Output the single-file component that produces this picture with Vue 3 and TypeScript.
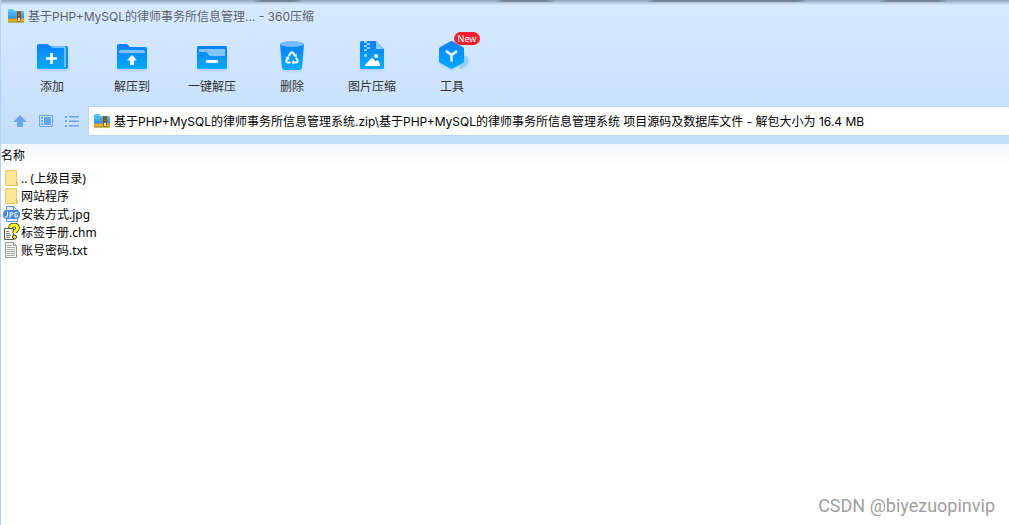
<script setup lang="ts">
import { ref } from 'vue'

type ToolIcon = 'add' | 'extract' | 'oneclick' | 'trash' | 'image' | 'tools'
type FileKind = 'folder' | 'jpg' | 'chm' | 'txt'

const tools: { icon: ToolIcon; label: string; badge?: string }[] = [
  { icon: 'add', label: '添加' },
  { icon: 'extract', label: '解压到' },
  { icon: 'oneclick', label: '一键解压' },
  { icon: 'trash', label: '删除' },
  { icon: 'image', label: '图片压缩' },
  { icon: 'tools', label: '工具', badge: 'New' },
]

const files: { kind: FileKind; name: string }[] = [
  { kind: 'folder', name: '.. (上级目录)' },
  { kind: 'folder', name: '网站程序' },
  { kind: 'jpg', name: '安装方式.jpg' },
  { kind: 'chm', name: '标签手册.chm' },
  { kind: 'txt', name: '账号密码.txt' },
]

const path = ref('基于PHP+MySQL的律师事务所信息管理系统.zip\\基于PHP+MySQL的律师事务所信息管理系统 项目源码及数据库文件 - 解包大小为 16.4 MB')
</script>

<template>
  <div class="window">
    <svg class="defs" width="0" height="0" aria-hidden="true">
      <defs>
        <linearGradient id="blue" x1="0" y1="0" x2="0" y2="1">
          <stop offset="0" stop-color="#0a80fb" />
          <stop offset="1" stop-color="#02abff" />
        </linearGradient>
        <linearGradient id="zipblue" x1="0" y1="0" x2="0" y2="1">
          <stop offset="0" stop-color="#5ccbfa" />
          <stop offset="1" stop-color="#2b92ea" />
        </linearGradient>
        <symbol id="archive" viewBox="0 0 16 16">
          <path d="M0 2.5Q0 1 1.500 1H5l2 2h7.500Q16 3 16 4.500V11H0z" fill="url(#zipblue)" />
          <path d="M0 10.500h16v3q0 1-1 1H1q-1 0-1-1z" fill="#f58a1f" />
          <path d="M0 11.500h16v1H0z" fill="#ffc928" />
          <path d="M0 13.500h16q0 1-1 1H1q-1 0-1-1z" fill="#7fb834" />
          <path d="M9 3h4v7H9z" fill="#8b4a19" />
          <path d="M11 3v7" stroke="#d99243" stroke-dasharray="1 1" />
          <rect x="9.500" y="9.500" width="3" height="4" rx="1" fill="#f9e6a6" stroke="#8a5220" />
        </symbol>
      </defs>
    </svg>

    <header class="chrome">
      <div class="titlebar">
        <svg class="small-icon"><use href="#archive" /></svg>
        <span>基于PHP+MySQL的律师事务所信息管理... - 360压缩</span>
      </div>

      <nav class="toolbar">
        <button v-for="tool in tools" :key="tool.icon" type="button" class="tool">
          <svg class="tool-icon" viewBox="0 0 32 32" aria-hidden="true">
            <g v-if="tool.icon === 'add'">
              <path d="M27 6h3q2 0 2 2v19q0 2-2 2h-3z" fill="#078ffb" />
              <path d="M1 5.500Q1 4 2.500 4h8.500q1 0 1.700.7L14 6h14q2 0 2 2v21H2.500Q1 29 1 27.500z" fill="url(#blue)" />
              <path d="M15 6h13q2 0 2 2v19h-2V9q0-1-1-1H16z" fill="#73bdfb" />
              <path d="M15.500 13v11M10 18.500h11" stroke="#fff" stroke-width="2.600" />
            </g>
            <g v-else-if="tool.icon === 'extract'">
              <path d="M1 5.500Q1 4 2.500 4H10q1 0 1.700.7L14 7h15.500Q31 7 31 8.500v19q0 1.500-1.500 1.500h-27Q1 29 1 27.500z" fill="url(#blue)" />
              <path d="M3 13v-1.500Q3 10 4.500 10h23q1.500 0 1.500 1.500V13z" fill="#82c5fc" />
              <path d="M16 15l5 5.500h-3V25h-4v-4.500h-3z" fill="#fff" />
            </g>
            <g v-else-if="tool.icon === 'oneclick'">
              <rect x="1" y="6" width="30" height="23" rx="1.500" fill="url(#blue)" />
              <path d="M3 9.500Q3 9 3.500 9h25q.5 0 .5.500V16H14.500q-1 0-1.700-1L11 12.500q-.6-.5-1.500-.5H3z" fill="#82c5fc" />
              <rect x="10" y="20" width="12" height="3" rx="1" fill="#fff" />
            </g>
            <g v-else-if="tool.icon === 'trash'">
              <path d="M4 4h24l-2 23q-.3 3-3.500 3h-13Q6.300 30 6 27z" fill="url(#blue)" />
              <ellipse cx="16" cy="4" rx="12" ry="3" fill="#74bafc" />
              <g fill="none" stroke="#e9f6ff" stroke-width="2.200">
                <path d="M12.800 16l2-3q1.200-1.500 2.400 0l1.800 3" />
                <path d="M20 17.500l1.500 2.800q.7 1.900-1.500 2.200h-3.500" />
                <path d="M14.500 22.500H12q-2.200-.3-1.500-2.200l1.300-2.300" />
              </g>
              <path d="M20.800 13.500l-.3 3.800-3.500-1.300zM17.800 19.800v5l-2.500-2.300zM9 17.300l3.900-1 .8 3.700z" fill="#e9f6ff" />
            </g>
            <g v-else-if="tool.icon === 'image'">
              <path d="M4 2.500Q4 1 5.500 1H20l8 8v18.500q0 1.500-1.500 1.500h-21Q4 29 4 27.500z" fill="url(#blue)" />
              <path d="M20 1l8 8h-7q-1 0-1-1z" fill="#8dcafd" />
              <path d="M8 1h3v2H8zM11 3h3v2h-3zM8 5h3v2H8zM11 7h3v2h-3zM8 9h3v2H8z" fill="#94cdfd" />
              <rect x="8" y="14" width="3" height="3" fill="#94cdfd" />
              <circle cx="20" cy="16" r="2" fill="#fff" />
              <path d="M9 26v-1l6-6.500q1-1 2 0l2.500 3 1.200-1q1-.8 1.800.2L24 24.500q.3 1.500-1 1.500z" fill="#fff" />
            </g>
            <g v-else>
              <path d="M26 14l6 3v7l-6.500 4-6.500-4z" fill="#96cdfc" />
              <path d="M14.200 1.400q1.300-.7 2.600 0l10 5.500Q28 7.600 28 9v12q0 1.400-1.200 2.100l-10 5.500q-1.300.7-2.600 0l-10-5.500Q3 22.400 3 21V9q0-1.400 1.200-2.100z" fill="url(#blue)" />
              <path d="M10 11l5.500 4 5.500-4M15.500 15v6.500" fill="none" stroke="#fff" stroke-width="2.400" />
            </g>
          </svg>
          <span>{{ tool.label }}</span>
          <span v-if="tool.badge" class="badge">{{ tool.badge }}</span>
        </button>
      </nav>

      <div class="addressbar">
        <div class="nav-buttons">
          <button type="button" aria-label="向上">
            <svg viewBox="0 0 16 16"><path d="M8 2l7 7h-4v5H5V9H1z" fill="#69a4ed" /></svg>
          </button>
          <button type="button" aria-label="预览">
            <svg viewBox="0 0 16 16">
              <path d="M1.500 2.500h13v11h-13z" fill="none" stroke="#69a4ed" />
              <path d="M3 4h2v2H3zM3 7h2v2H3zM3 10h2v2H3zM6 4h7v8H6z" fill="#69a4ed" />
            </svg>
          </button>
          <button type="button" aria-label="列表">
            <svg viewBox="0 0 16 16">
              <path d="M1 3h2v2H1zM1 7h2v2H1zM1 12h2v2H1zM5 3h10v1.500H5zM5 7.500h10V9H5zM5 12h10v1.500H5z" fill="#69a4ed" />
            </svg>
          </button>
        </div>
        <label class="path">
          <svg class="small-icon" aria-hidden="true"><use href="#archive" /></svg>
          <input v-model="path" type="text" aria-label="路径" />
        </label>
      </div>
    </header>

    <main class="content">
      <table>
        <thead>
          <tr><th scope="col">名称</th></tr>
        </thead>
        <tbody>
          <tr v-for="file in files" :key="file.name">
            <td>
              <div class="file">
                <svg viewBox="0 0 18 18" aria-hidden="true">
                  <g v-if="file.kind === 'folder'">
                    <path d="M2.500 1.500h11v12h1v3h-12z" fill="#fce596" stroke="#e8c967" />
                    <path d="M13.500 11v5" stroke="#e2bd58" />
                  </g>
                  <g v-else-if="file.kind === 'jpg'">
                    <path d="M3.500 1.500h7l4 4v11h-11z" fill="#e9f2ff" stroke="#5b94db" />
                    <path d="M10.500 1.500v4h4" fill="none" stroke="#5b94db" />
                    <rect x="0" y="5" width="17" height="9" rx="4" fill="#4a8bdd" />
                    <path d="M4.500 6.500V11q0 1-1 1H2M7 13V7.500h1.500q1.500 0 1.500 1.200T8.500 10H7M14.500 7.500H12V12h2.500v-2h-1" fill="none" stroke="#fff" />
                  </g>
                  <g v-else-if="file.kind === 'chm'">
                    <path d="M1.500 5.500h9v11h-9z" fill="#fff" stroke="#555" />
                    <path d="M3 8.500h3M3 10.500h4M3 12.500h5M3 14.500h4" stroke="#777" />
                    <path d="M7.500 5q0-3 3.500-3t3.500 3q0 1.500-1.500 2.500-1.500 1-1.500 2.500" fill="none" stroke="#222" stroke-width="4.500" />
                    <path d="M7.500 5q0-3 3.500-3t3.500 3q0 1.500-1.500 2.500-1.500 1-1.500 2.500" fill="none" stroke="#ff0" stroke-width="3" />
                    <circle cx="11.500" cy="14" r="2" fill="#ff0" stroke="#222" />
                  </g>
                  <g v-else>
                    <path d="M2.500 1.500h8l3 3v12h-11z" fill="#f6f6f6" stroke="#999" />
                    <path d="M10.500 1.500v3h3" fill="none" stroke="#999" />
                    <path d="M4 4.500h5M4 6.500h8M4 8.500h8M4 10.500h8M4 12.500h8M4 14.500h8" stroke="#aaa" />
                  </g>
                </svg>
                <span>{{ file.name }}</span>
              </div>
            </td>
          </tr>
        </tbody>
      </table>
      <p class="watermark">CSDN @biyezuopinvip</p>
    </main>
  </div>
</template>

<style>
body {
  margin: 0;
}
</style>

<style scoped>
.window {
  display: flex;
  flex-direction: column;
  box-sizing: border-box;
  min-height: 100vh;
  border-left: 1px solid #b5d2ef;
  background: #fff;
  color: #000;
  font: 12px/18px "Noto Sans", "Noto Sans CJK SC", sans-serif;
}
.defs {
  position: absolute;
}
.chrome {
  padding-bottom: 9px;
  background:
    linear-gradient(90deg, transparent 25%, rgba(75, 88, 105, 0.5) 26% 29%, transparent 30% 49%, rgba(75, 88, 105, 0.5) 50% 54%, transparent 55% 64%, rgba(75, 88, 105, 0.5) 65% 79%, transparent 80% 87%, rgba(75, 88, 105, 0.5) 88% 93%, transparent 94%) top / 100% 2px no-repeat,
    linear-gradient(rgba(70, 88, 108, 0.5), rgba(70, 88, 108, 0) 5px),
    linear-gradient(#d7ebff, #cde3fc 60%, #c3def9);
}
.titlebar {
  display: flex;
  align-items: center;
  gap: 4px;
  height: 32px;
  padding-left: 7px;
  color: #5c6269;
  font-family: Inter, "Noto Sans CJK SC", sans-serif;
}
.titlebar span,
.file span {
  padding-top: 2px;
}
.small-icon {
  flex: none;
  width: 16px;
  height: 16px;
}
button {
  padding: 0;
  border: 0;
  background: none;
  font: inherit;
}
.toolbar {
  display: flex;
  padding: 8px 11px 11px;
}
.tool {
  position: relative;
  display: flex;
  flex-direction: column;
  align-items: center;
  gap: 6px;
  width: 80px;
  color: #333;
}
.tool-icon {
  width: 32px;
  height: 32px;
  filter: drop-shadow(0 2px 1px rgba(70, 150, 240, 0.2));
}
.badge {
  position: absolute;
  top: -8px;
  left: 42px;
  width: 26px;
  border-radius: 7px;
  background: #fa2030;
  color: #fff;
  font-size: 9px;
  line-height: 13px;
  text-align: center;
}
.addressbar {
  display: flex;
}
.nav-buttons {
  display: flex;
  align-items: center;
  gap: 10px;
  padding: 0 9px 0 11px;
}
.nav-buttons button,
.nav-buttons svg {
  display: block;
  width: 16px;
  height: 16px;
}
.path {
  display: flex;
  flex: 1;
  align-items: center;
  gap: 4px;
  height: 28px;
  padding-left: 5px;
  background: #fff;
  box-shadow: 0 0 0 1px #b9d6f3;
}
.path input {
  flex: 1;
  min-width: 0;
  padding: 2px 0 0;
  border: 0;
  outline: 0;
  background: none;
  color: #000;
  font: 12px/18px Inter, "Noto Sans CJK SC", sans-serif;
}
.content {
  position: relative;
  flex: 1;
  background: linear-gradient(#f2f8ff, #fff 24px);
}
table {
  width: 100%;
  border-collapse: collapse;
}
th {
  height: 23px;
  padding: 0 0 2px;
  font-weight: 400;
  text-align: left;
}
td {
  padding: 0;
}
.file {
  display: flex;
  align-items: center;
  padding-left: 2px;
  height: 18px;
}
.file svg {
  width: 18px;
  height: 18px;
}
.watermark {
  position: absolute;
  right: 14px;
  bottom: 7px;
  margin: 0;
  color: #a0a0a0;
  font: 18px/24px Roboto, sans-serif;
}
</style>
